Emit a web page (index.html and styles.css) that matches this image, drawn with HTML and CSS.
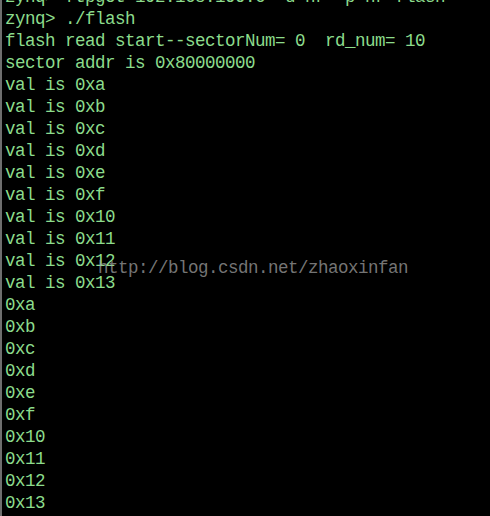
FILE: index.html
```html
<!DOCTYPE html>
<html>
<head>
<meta charset="utf-8">
<link rel="stylesheet" href="styles.css">
</head>
<body>
<div class="term">
<pre class="out">zynq> ftpget 192.168.100.6 -u nr -p nr flash
zynq> ./flash
flash read start--sectorNum= 0  rd_num= 10
sector addr is 0x80000000
val is 0xa
val is 0xb
val is 0xc
val is 0xd
val is 0xe
val is 0xf
val is 0x10
val is 0x11
val is 0x12
val is 0x13
0xa
0xb
0xc
0xd
0xe
0xf
0x10
0x11
0x12
0x13</pre>
<div class="mark">http://blog.csdn.net/zhaoxinfan</div>
</div>
</body>
</html>
```
FILE: styles.css
```css
html, body {
  margin: 0;
  padding: 0;
  background: #000;
  width: 490px;
  height: 516px;
  overflow: hidden;
}
.term {
  position: relative;
  width: 488px;
  height: 516px;
  border-left: 2px solid #6e6e6e;
  background: #000;
  overflow: hidden;
}
.out {
  margin: -14px 0 0 3px;
  font-family: "Liberation Mono", monospace;
  font-size: 17.5px;
  letter-spacing: -0.5px;
  line-height: 22px;
  color: #8cdc8c;
}
.mark {
  position: absolute;
  left: 96px;
  top: 257px;
  font-family: "Liberation Mono", monospace;
  font-size: 17.5px;
  letter-spacing: -0.5px;
  line-height: 22px;
  color: rgba(170, 170, 170, 0.7);
}
```
